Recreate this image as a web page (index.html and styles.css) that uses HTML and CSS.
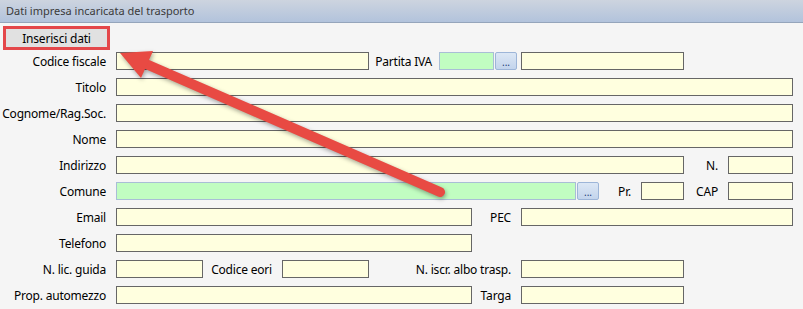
FILE: index.html
```html
<!DOCTYPE html>
<html lang="it">
<head>
  <meta charset="UTF-8" />
  <title>Dati impresa incaricata del trasporto</title>
  <link rel="stylesheet" href="styles.css">
</head>
<body>
  <div class="panel-title">Dati impresa incaricata del trasporto</div>

  <div class="form">
    <div class="toolbar">
      <button class="btn-insert">Inserisci dati</button>
    </div>

    <div class="row first">
      <label class="lbl">Codice fiscale</label>
      <input class="fld w-253">
      <label class="mid lbl-piva">Partita IVA</label>
      <input class="fld lookup w-55">
      <button class="dots">...</button>
      <input class="fld w-163 after-dots">
    </div>

    <div class="row">
      <label class="lbl">Titolo</label>
      <input class="fld w-full">
    </div>

    <div class="row">
      <label class="lbl">Cognome/Rag.Soc.</label>
      <input class="fld w-full">
    </div>

    <div class="row">
      <label class="lbl">Nome</label>
      <input class="fld w-full">
    </div>

    <div class="row">
      <label class="lbl">Indirizzo</label>
      <input class="fld w-568">
      <label class="mid w-l44">N.</label>
      <input class="fld w-65">
    </div>

    <div class="row">
      <label class="lbl">Comune</label>
      <input class="fld lookup w-460">
      <button class="dots">...</button>
      <label class="mid w-l42">Pr.</label>
      <input class="fld w-43">
      <label class="mid w-l44">CAP</label>
      <input class="fld w-65">
    </div>

    <div class="row">
      <label class="lbl">Email</label>
      <input class="fld w-356">
      <label class="mid w-l49">PEC</label>
      <input class="fld w-272">
    </div>

    <div class="row">
      <label class="lbl">Telefono</label>
      <input class="fld w-356">
    </div>

    <div class="row">
      <label class="lbl">N. lic. guida</label>
      <input class="fld w-87">
      <label class="mid w-l79">Codice eori</label>
      <input class="fld w-87">
      <label class="mid w-l152">N. iscr. albo trasp.</label>
      <input class="fld w-163">
    </div>

    <div class="row">
      <label class="lbl">Prop. automezzo</label>
      <input class="fld w-356">
      <label class="mid w-l49">Targa</label>
      <input class="fld w-163">
    </div>
  </div>

  <!-- callout arrow drawn over the form -->
  <svg class="callout" width="803" height="309" viewBox="0 0 803 309">
    <line x1="146" y1="64" x2="440" y2="192" stroke="#e84a43" stroke-width="10" stroke-linecap="round"/>
    <polygon points="120,53 153,51 141,78" fill="#e84a43"/>
  </svg>
</body>
</html>
```

FILE: styles.css
```css
* {
  margin: 0;
  padding: 0;
  box-sizing: border-box;
}

body {
  font-family: "Noto Sans", "Open Sans", sans-serif;
  font-size: 12px;
  color: #000;
  background: #f5f5f5;
  width: 803px;
  height: 309px;
  overflow: hidden;
  position: relative;
}

/* panel header */
.panel-title {
  height: 23px;
  padding-left: 6px;
  font-size: 11px;
  line-height: 21px;
  color: #3a3a3a;
  background: linear-gradient(#cdd4df, #b2c3dc);
  border-bottom: 1px solid #95a5bb;
}

/* form body */
.form {
  padding-top: 3px;
  letter-spacing: -0.2px;
}
.toolbar {
  padding-left: 3px;
  height: 26px;
}
.btn-insert {
  width: 107px;
  height: 24px;
  font-family: inherit;
  font-size: 12px;
  letter-spacing: -0.2px;
  color: #000;
  background: #e1e1e1;
  border: 3px solid #e4474a;
  cursor: pointer;
}

.row {
  display: flex;
  align-items: center;
  height: 18px;
  margin-top: 8px;
}
.row.first {
  margin-top: 0;
}

/* labels */
.lbl {
  width: 106px;
  margin-right: 10px;
  text-align: right;
  white-space: nowrap;
}
.mid {
  text-align: right;
  padding-right: 10px;
  white-space: nowrap;
}
.lbl-piva {
  width: 70px;
  padding-right: 7px;
}
.w-l42 { width: 42px; }
.w-l44 { width: 44px; }
.w-l49 { width: 49px; }
.w-l79 { width: 79px; }
.w-l152 { width: 152px; }

/* fields */
.fld {
  height: 18px;
  border: 1px solid #666;
  background: #ffffdf;
  font-family: inherit;
  font-size: 12px;
  outline: none;
}
.fld.lookup {
  background: #c1fdc1;
  border-color: #a9bed6;
}
.after-dots {
  margin-left: 4px;
}

.w-43 { width: 43px; }
.w-55 { width: 55px; }
.w-65 { width: 65px; }
.w-87 { width: 87px; }
.w-163 { width: 163px; }
.w-253 { width: 253px; }
.w-272 { width: 272px; }
.w-356 { width: 356px; }
.w-460 { width: 460px; }
.w-568 { width: 568px; }
.w-full { width: 677px; }

/* lookup button */
.dots {
  width: 22px;
  height: 18px;
  margin-left: 1px;
  border: 1px solid #9db5d8;
  border-radius: 2px;
  background: linear-gradient(#dce7f5, #c3d4ec);
  color: #1d3d78;
  font-family: inherit;
  font-size: 10px;
  line-height: 14px;
  padding-top: 2px;
  letter-spacing: 0;
}

/* red arrow on top */
.callout {
  position: absolute;
  top: 0;
  left: 0;
  pointer-events: none;
  filter: drop-shadow(1px 2px 2px rgba(0, 0, 0, 0.35));
}
```
